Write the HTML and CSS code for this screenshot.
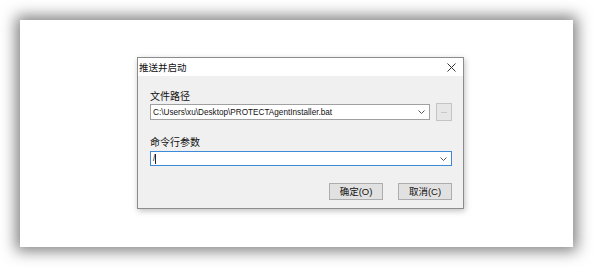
FILE: index.html
```html
<!DOCTYPE html>
<html>
	<head>
		<meta charset="UTF-8">
		<title>推送并启动</title>
		<link rel="stylesheet" href="styles.css">
	</head>
	<body>
		<div class="page">
			<div class="card">
				<div class="dialog">
					<div class="titlebar">
						<span class="title">推送并启动</span>
						<svg class="close" width="9" height="9" viewBox="0 0 9 9">
							<path d="M0.5 0.5 L8.5 8.5 M8.5 0.5 L0.5 8.5" stroke="#333" stroke-width="1" fill="none"/>
						</svg>
					</div>
					<div class="body">
						<div class="label">文件路径</div>
						<div class="row">
							<div class="combo">
								<span class="value">C:\Users\xu\Desktop\PROTECTAgentInstaller.bat</span>
								<svg class="arrow" width="7" height="4" viewBox="0 0 7 4">
									<path d="M0.5 0.5 L3.5 3.5 L6.5 0.5" stroke="#555" stroke-width="1" fill="none"/>
								</svg>
							</div>
							<div class="browse">...</div>
						</div>
						<div class="label second">命令行参数</div>
						<div class="combo focus">
							<span class="value">/<span class="caret"></span></span>
							<svg class="arrow" width="7" height="4" viewBox="0 0 7 4">
								<path d="M0.5 0.5 L3.5 3.5 L6.5 0.5" stroke="#555" stroke-width="1" fill="none"/>
							</svg>
						</div>
						<div class="buttons">
							<div class="btn">确定(O)</div>
							<div class="btn">取消(C)</div>
						</div>
					</div>
				</div>
			</div>
		</div>
	</body>
</html>
```

FILE: styles.css
```css
body{
	margin: 0;
	background-color: #fff;
	font-family: "Liberation Sans", "Noto Sans CJK SC", sans-serif;
	color: #1a1a1a;
}
.page{
	width: 594px;
	height: 267px;
	padding: 20px 21px 20px 20px;
	box-sizing: border-box;
}
.card{
	height: 227px;
	background-color: #fff;
	box-shadow: 0 0 14px 4px rgba(0,0,0,.5);
	padding: 37px 0 0 117px;
	box-sizing: border-box;
}
.dialog{
	width: 327px;
	height: 152px;
	box-sizing: border-box;
	border: 1px solid #8c8c8c;
	background-color: #f0f0f0;
	box-shadow: 1px 2px 6px rgba(0,0,0,.25);
}
.titlebar{
	height: 18px;
	background-color: #fff;
	display: flex;
	align-items: center;
	justify-content: space-between;
	padding: 0 7px 0 1px;
}
.title{
	font-size: 9.5px;
	color: #111;
}
.body{
	padding: 15px 11px 0 12px;
}
.label{
	font-size: 10px;
	line-height: 12px;
	margin-bottom: 0;
	color: #111;
}
.label.second{
	margin-top: 16px;
	margin-bottom: 2px;
}
.row{
	display: flex;
	align-items: center;
	gap: 6px;
}
.combo{
	flex: 1;
	height: 16px;
	box-sizing: border-box;
	border: 1px solid #a0a0a0;
	background-color: #fff;
	display: flex;
	align-items: center;
	justify-content: space-between;
	padding: 0 4px 0 2px;
}
.combo.focus{
	border-color: #3c8ad8;
	height: 15px;
}
.value{
	font-size: 8.2px;
	color: #111;
	white-space: nowrap;
	display: flex;
	align-items: center;
}
.caret{
	display: inline-block;
	width: 1px;
	height: 10px;
	background-color: #222;
}
.browse{
	width: 16px;
	height: 18px;
	box-sizing: border-box;
	border: 1px solid #c4c4c4;
	background-color: #e6e6e6;
	font-size: 7px;
	color: #777;
	text-align: center;
	line-height: 14px;
}
.buttons{
	display: flex;
	justify-content: flex-end;
	gap: 15px;
	margin-top: 17px;
}
.btn{
	width: 54px;
	height: 17px;
	box-sizing: border-box;
	border: 1px solid #adadad;
	background-color: #e1e1e1;
	font-size: 9.5px;
	line-height: 15px;
	text-align: center;
	color: #111;
}
```
